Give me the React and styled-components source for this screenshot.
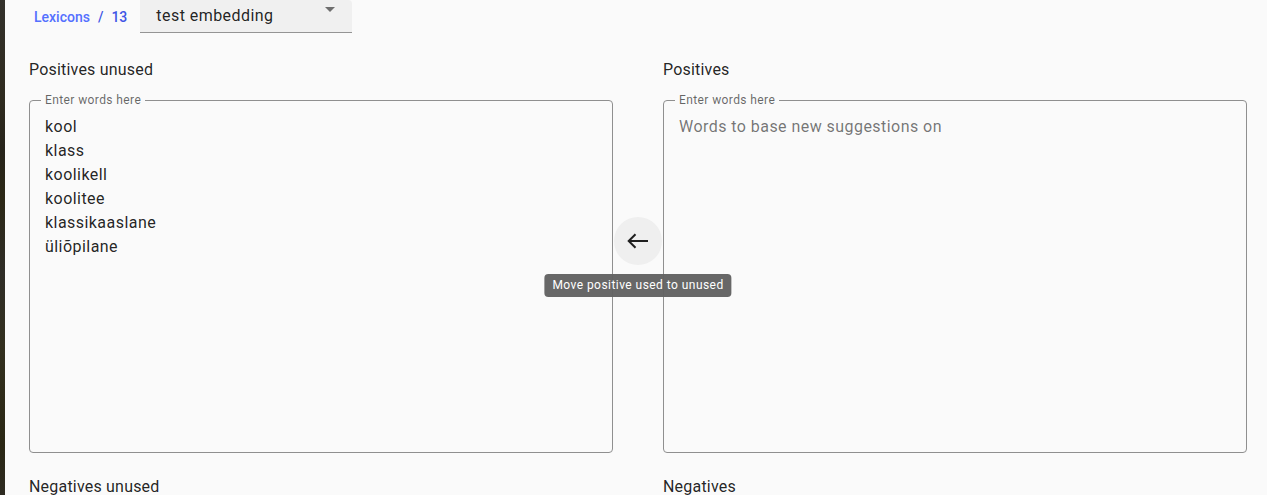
import React from 'react';
import styled, {createGlobalStyle} from 'styled-components';

const GlobalStyle = createGlobalStyle`
  html, body {
    margin: 0;
    padding: 0;
    background: #fafafa;
    height: 100%;
    overflow: hidden;
  }
  body {
    font-family: Roboto, "Liberation Sans", sans-serif;
    color: rgba(0, 0, 0, 0.87);
  }
`;

const words = ['kool', 'klass', 'koolikell', 'koolitee', 'klassikaaslane', 'üliõpilane'];

const App = () => (
    <>
        <GlobalStyle/>
        <Page>
            <SideStrip/>
            <Main>
                <Header>
                    <Crumbs>
                        <CrumbLink>Lexicons</CrumbLink>
                        <CrumbCurrent>/</CrumbCurrent>
                        <CrumbCurrent>13</CrumbCurrent>
                    </Crumbs>
                    <Select>
                        <SelectValue>test embedding</SelectValue>
                        <DropIcon viewBox="0 0 24 24">
                            <path d="M7 10l5 5 5-5z"/>
                        </DropIcon>
                    </Select>
                </Header>

                <Row>
                    <Column>
                        <SectionTitle>Positives unused</SectionTitle>
                        <WordBox>
                            <Legend>Enter words here</Legend>
                            <WordArea defaultValue={words.join('\n')} spellCheck={false}/>
                        </WordBox>
                    </Column>
                    <Middle>
                        <MoveButton aria-label="Move positive used to unused">
                            <svg width="24" height="24" viewBox="0 0 24 24" fill="none"
                                 stroke="#1f1f1f" strokeWidth="2">
                                <path d="M22 12H3"/>
                                <path d="M9.5 5.2L2.7 12l6.8 6.8"/>
                            </svg>
                            <Tooltip>Move positive used to unused</Tooltip>
                        </MoveButton>
                    </Middle>
                    <Column>
                        <SectionTitle>Positives</SectionTitle>
                        <WordBox>
                            <Legend>Enter words here</Legend>
                            <WordArea placeholder="Words to base new suggestions on" spellCheck={false}/>
                        </WordBox>
                    </Column>
                </Row>

                <Row>
                    <Column>
                        <SectionTitle>Negatives unused</SectionTitle>
                        <WordBox>
                            <Legend>Enter words here</Legend>
                            <WordArea spellCheck={false}/>
                        </WordBox>
                    </Column>
                    <Middle/>
                    <Column>
                        <SectionTitle>Negatives</SectionTitle>
                        <WordBox>
                            <Legend>Enter words here</Legend>
                            <WordArea spellCheck={false}/>
                        </WordBox>
                    </Column>
                </Row>
            </Main>
        </Page>
    </>
);


const Page = styled.div`
  display: flex;
  height: 495px;
  overflow: hidden;
`;

const SideStrip = styled.div`
  flex: 0 0 5px;
  background: linear-gradient(180deg, #33312b 0%, #2f2b1f 20%, #27241b 30%, #2c2816 40%, #2f2d27 55%, #33301f 70%, #2a2714 90%, #2e2b22 100%);
`;

const Main = styled.main`
  flex: 1;
  min-width: 0;
  padding: 0 20px 0 24px;
`;

const Header = styled.div`
  display: flex;
  align-items: center;
  gap: 13px;
  height: 33px;
  padding-left: 5px;
`;

const Crumbs = styled.div`
  display: flex;
  align-items: center;
  gap: 8px;
  font-size: 14px;
  font-weight: 500;
  padding-top: 1px;
`;

const CrumbLink = styled.span`
  color: #5470ff;
`;

const CrumbCurrent = styled.span`
  color: #3f55e6;
`;

const Select = styled.div`
  position: relative;
  display: flex;
  align-items: flex-end;
  box-sizing: border-box;
  width: 212px;
  height: 33px;
  padding: 0 12px 5px 16px;
  background: #f0f0f0;
  border-bottom: 1px solid #949494;
  border-top-right-radius: 4px;
`;

const SelectValue = styled.span`
  font-size: 16px;
  line-height: 23px;
  letter-spacing: 0.45px;
  color: rgba(0, 0, 0, 0.87);
`;

const DropIcon = styled.svg`
  position: absolute;
  right: 10px;
  top: -3px;
  width: 24px;
  height: 24px;
  fill: rgba(0, 0, 0, 0.54);
`;

const Row = styled.div`
  display: grid;
  grid-template-columns: 1fr 50px 1fr;
  margin-top: 25px;
  & + & {
    margin-top: 22px;
  }
`;

const Column = styled.div`
  display: flex;
  flex-direction: column;
  min-width: 0;
`;

const SectionTitle = styled.div`
  font-size: 16px;
  line-height: 24px;
  letter-spacing: 0.2px;
  color: rgba(0, 0, 0, 0.87);
  margin-bottom: 12px;
`;

const WordBox = styled.fieldset`
  margin: 0;
  padding: 0;
  min-width: 0;
  border: 1px solid #8f8f8f;
  border-radius: 4px;
`;

const Legend = styled.legend`
  margin-left: 11px;
  padding: 0 4px;
  font-size: 12px;
  line-height: 12px;
  letter-spacing: 0.4px;
  color: rgba(0, 0, 0, 0.6);
`;

const WordArea = styled.textarea`
  display: block;
  box-sizing: border-box;
  width: 100%;
  height: 346px;
  margin: 0;
  padding: 9px 14px 0 15px;
  border: none;
  outline: none;
  resize: none;
  background: transparent;
  font-family: Roboto, "Liberation Sans", sans-serif;
  font-size: 16px;
  line-height: 24px;
  letter-spacing: 0.45px;
  color: rgba(0, 0, 0, 0.87);
  &::placeholder {
    color: rgba(0, 0, 0, 0.55);
  }
`;

const Middle = styled.div`
  display: flex;
  flex-direction: column;
  align-items: center;
  justify-content: center;
  padding-bottom: 30px;
`;

const MoveButton = styled.button`
  position: relative;
  display: flex;
  align-items: center;
  justify-content: center;
  width: 48px;
  height: 48px;
  padding: 0;
  border: none;
  border-radius: 50%;
  background: #efefef;
  cursor: pointer;
`;

const Tooltip = styled.span`
  position: absolute;
  top: 57px;
  left: 50%;
  transform: translateX(-50%);
  white-space: nowrap;
  padding: 4px 8px;
  border-radius: 4px;
  background: rgba(97, 97, 97, 0.96);
  color: #fff;
  font-family: Roboto, "Liberation Sans", sans-serif;
  font-size: 12px;
  font-weight: 400;
  letter-spacing: 0.45px;
  line-height: 15px;
`;

export default App;
